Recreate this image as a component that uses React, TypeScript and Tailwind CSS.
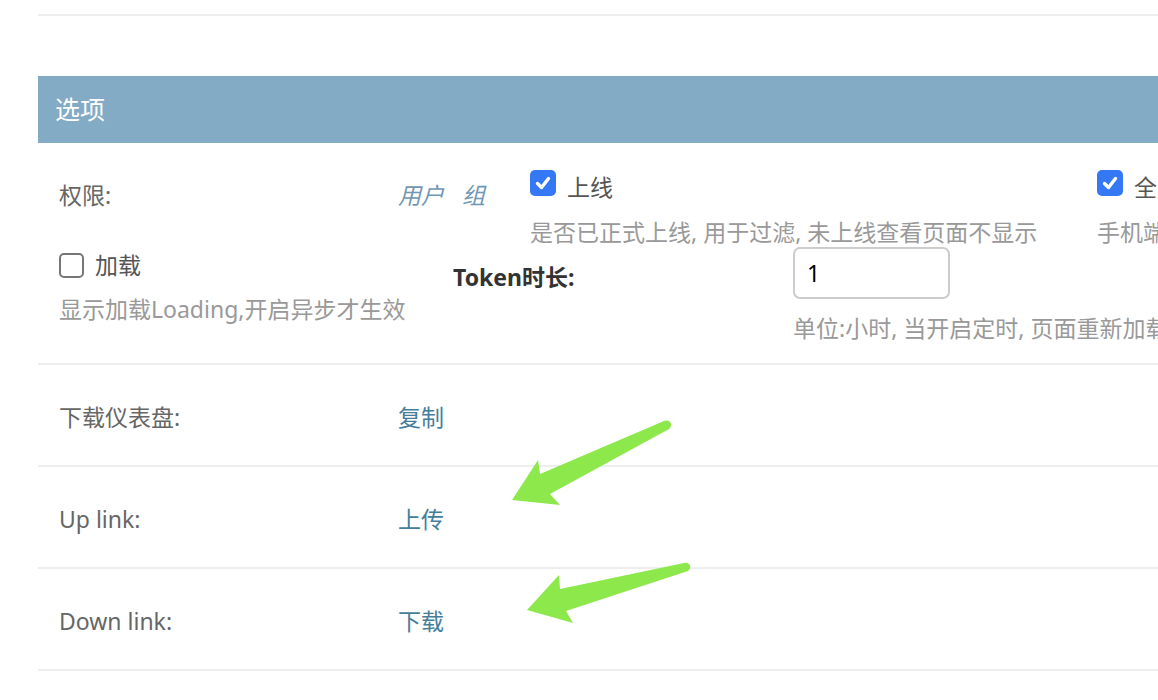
import React from "react";

const font = "font-['Noto_Sans','Noto_Sans_CJK_SC',sans-serif]";

const Checked: React.FC = () => (
  <span className="flex h-[26px] w-[26px] shrink-0 items-center justify-center rounded-[5px] bg-[#3478f6]">
    <svg width="18" height="18" viewBox="0 0 18 18">
      <path d="M3.5 9.5 L7.5 13.5 L14.5 4.5" fill="none" stroke="#fff" strokeWidth="3.4" strokeLinecap="round" strokeLinejoin="round" />
    </svg>
  </span>
);

const Unchecked: React.FC = () => (
  <span className="block h-[25px] w-[25px] shrink-0 rounded-[5px] border-2 border-[#767676] bg-white" />
);

const LinkRow: React.FC<{ label: string; link: string }> = ({ label, link }) => (
  <div className="flex h-[102px] items-center border-b-2 border-[#eee] pl-[21px] pt-[5px] text-[23px]">
    <div className="w-[339px] shrink-0 text-[#666]">{label}</div>
    <a className="text-[#447e9b]">{link}</a>
  </div>
);

const App: React.FC = () => {
  return (
    <div className={`relative h-[700px] w-[1158px] overflow-hidden bg-white ${font}`}>
      <div className="ml-[38px] mt-[14px] w-[1300px] border-t-2 border-[#eee]" />

      <div className="ml-[38px] mt-[60px] w-[1300px]">
        <h2 className="flex h-[67px] items-center bg-[#84abc5] px-[17px] text-[25px] font-normal text-white">选项</h2>

        {/* options row */}
        <div className="h-[222px] border-b-2 border-[#eee] pl-[21px] pt-[27px] text-[23px]">
          <div className="flex items-start gap-x-10">
            <div className="mt-[10px] flex w-[431px] shrink-0 whitespace-nowrap leading-[30px]">
              <div className="w-[339px] shrink-0 text-[#666]">权限:</div>
              <a className="italic text-[#7097b3]">用户</a>
              <a className="ml-[18px] italic text-[#7097b3]">组</a>
            </div>
            <div className="w-[527px] shrink-0">
              <div className="flex items-start">
                <Checked />
                <span className="ml-[11px] mt-[2px] leading-[30px] text-[#555]">上线</span>
              </div>
              <p className="mt-[15px] whitespace-nowrap leading-[30px] text-[#999]">是否已正式上线, 用于过滤, 未上线查看页面不显示</p>
            </div>
            <div className="w-[400px] shrink-0">
              <div className="flex items-start">
                <Checked />
                <span className="ml-[11px] mt-[2px] whitespace-nowrap leading-[30px] text-[#555]">全屏</span>
              </div>
              <p className="mt-[15px] whitespace-nowrap leading-[30px] text-[#999]">手机端全屏</p>
            </div>
          </div>

          <div className="flex items-start gap-x-10">
            <div className="mt-[3px] w-[354px] shrink-0">
              <div className="flex h-[30px] items-center">
                <Unchecked />
                <span className="ml-[11px] leading-[30px] text-[#555]">加载</span>
              </div>
              <p className="mt-[14px] whitespace-nowrap leading-[30px] text-[#999]">显示加载Loading,开启异步才生效</p>
            </div>
            <div className="flex shrink-0 items-start">
              <label className="mt-[15px] w-[340px] shrink-0 font-bold leading-[30px] text-[#333]">Token时长:</label>
              <div>
                <input
                  readOnly
                  value="1"
                  className="h-[52px] w-[157px] rounded-[7px] border-2 border-[#ccc] px-[12px] text-[23px] text-black outline-none"
                />
                <p className="mt-[14px] whitespace-nowrap leading-[30px] text-[#999]">单位:小时, 当开启定时, 页面重新加载</p>
              </div>
            </div>
          </div>
        </div>

        <LinkRow label="下载仪表盘:" link="复制" />
        <LinkRow label="Up link:" link="上传" />
        <LinkRow label="Down link:" link="下载" />
      </div>

      {/* annotation arrows */}
      <svg className="pointer-events-none absolute left-0 top-0" width="1158" height="700" viewBox="0 0 1158 700">
        <polygon points="512,500 538,460 540,474 664,421 669,429 550,494 560,505" fill="#8de84c" />
        <circle cx="666.5" cy="425" r="4.6" fill="#8de84c" />
        <polygon points="527,610 559,575 560,589 684,563 688,571 566,611 573,623" fill="#8de84c" />
        <circle cx="686" cy="567" r="4.3" fill="#8de84c" />
      </svg>
    </div>
  );
};

export default App;
